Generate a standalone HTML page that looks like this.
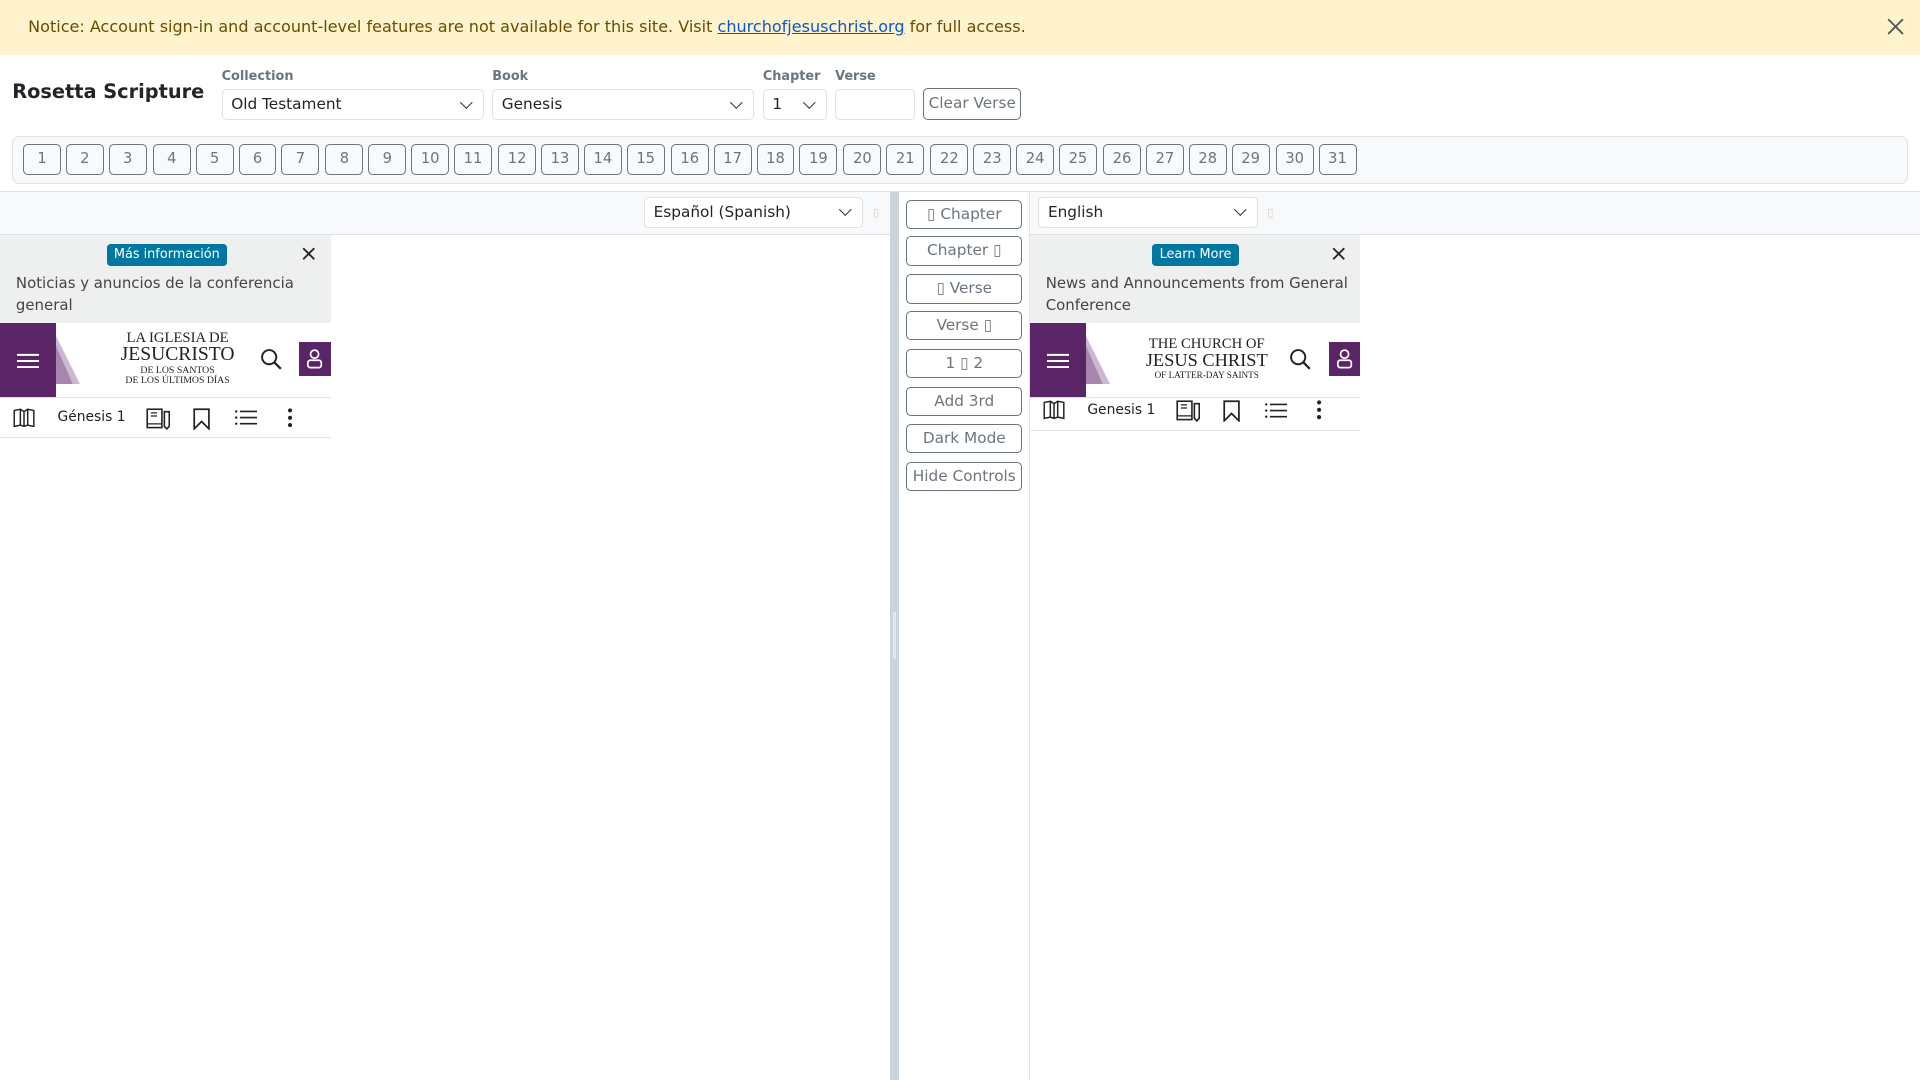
<!DOCTYPE html>
<html><head><meta charset="utf-8">
<style>
html{zoom:1.2245}
*{box-sizing:border-box;margin:0;padding:0}
body{width:1568px;height:882px;overflow:hidden;font-family:"DejaVu Sans","Liberation Sans",sans-serif;background:#fff;color:#212529;position:relative}
.abs{position:absolute}
.notice{left:0;top:0;width:1568px;height:45px;background:#fff3cd;color:#664d03;font-size:13.1px;padding:14px 23px}
.notice a{color:#0a58ca;text-decoration:underline}
.lbl{font-size:10.5px;font-weight:bold;color:#6c757d;top:56px}
.sel{top:73px;height:25px;border:1px solid #dee2e6;border-radius:4px;background:#fff;font-size:12.5px;padding:4px 7px;color:#212529}
.chev{position:absolute;right:10px;top:6px;width:7px;height:7px;border-right:1.5px solid #333;border-bottom:1.5px solid #333;transform:rotate(45deg)}
.btn{border:1px solid #6c757d;border-radius:4px;color:#6c757d;font-size:12.5px;text-align:center;background:#fff}
.bar{left:10px;top:111px;width:1548px;height:39px;background:#f8f9fa;border:1px solid #dee2e6;border-radius:6px}
.num{position:absolute;top:6px;width:31px;height:25px;line-height:23px;font-size:12px;background:#f8f9fa}
.ph{top:157px;height:35px;background:#f8f9fa;border-bottom:1px solid #dee2e6}
.mbtn{position:absolute;left:740px;width:95px;height:24px;line-height:22px}
.banner{background:#eeefef;height:72px;width:270px;font-size:12.2px;color:#444}
.learn{position:absolute;top:7px;background:#0077a0;color:#fff;font-size:10.5px;padding:3px 6px;border-radius:3px}
.hdr{height:60px;width:270px;background:#fff}
.tb{font-size:11.3px;color:#222}
</style></head><body>
<div class="abs notice">Notice: Account sign-in and account-level features are not available for this site. Visit <a>churchofjesuschrist.org</a> for full access.
<svg class="abs" style="left:1541px;top:15px" width="14" height="14" viewBox="0 0 14 14"><path d="M1 1L13 13M13 1L1 13" stroke="#555" stroke-width="1.5"/></svg></div>

<div class="abs" style="left:10px;top:65px;font-size:15.8px;font-weight:bold">Rosetta Scripture</div>
<div class="abs lbl" style="left:181px">Collection</div>
<div class="abs lbl" style="left:402px">Book</div>
<div class="abs lbl" style="left:623px">Chapter</div>
<div class="abs lbl" style="left:682px">Verse</div>
<div class="abs sel" style="left:181px;width:214px">Old Testament<span class="chev"></span></div>
<div class="abs sel" style="left:402px;width:214px">Genesis<span class="chev"></span></div>
<div class="abs sel" style="left:623px;width:52px">1<span class="chev"></span></div>
<div class="abs sel" style="left:682px;width:65px"></div>
<div class="abs btn" style="left:754px;top:72px;width:80px;height:26px;line-height:24px">Clear Verse</div>

<div class="abs bar">
<div class="num btn" style="left:8px">1</div><div class="num btn" style="left:43px">2</div><div class="num btn" style="left:78px">3</div><div class="num btn" style="left:114px">4</div><div class="num btn" style="left:149px">5</div><div class="num btn" style="left:184px">6</div><div class="num btn" style="left:219px">7</div><div class="num btn" style="left:255px">8</div><div class="num btn" style="left:290px">9</div><div class="num btn" style="left:325px">10</div><div class="num btn" style="left:360px">11</div><div class="num btn" style="left:396px">12</div><div class="num btn" style="left:431px">13</div><div class="num btn" style="left:466px">14</div><div class="num btn" style="left:501px">15</div><div class="num btn" style="left:537px">16</div><div class="num btn" style="left:572px">17</div><div class="num btn" style="left:607px">18</div><div class="num btn" style="left:642px">19</div><div class="num btn" style="left:678px">20</div><div class="num btn" style="left:713px">21</div><div class="num btn" style="left:749px">22</div><div class="num btn" style="left:784px">23</div><div class="num btn" style="left:819px">24</div><div class="num btn" style="left:854px">25</div><div class="num btn" style="left:890px">26</div><div class="num btn" style="left:925px">27</div><div class="num btn" style="left:960px">28</div><div class="num btn" style="left:995px">29</div><div class="num btn" style="left:1031px">30</div><div class="num btn" style="left:1066px">31</div>
</div>

<div class="abs" style="left:0;top:156px;width:1568px;height:1px;background:#dee2e6"></div>
<div class="abs ph" style="left:0;width:727px"></div>
<div class="abs ph" style="left:841px;width:727px"></div>
<div class="abs sel" style="left:526px;top:161px;width:179px">Español (Spanish)<span class="chev"></span></div>
<div class="abs" style="left:713px;top:168px;font-size:9px;color:#ccc">▯</div>
<div class="abs sel" style="left:848px;top:161px;width:179px">English<span class="chev"></span></div>
<div class="abs" style="left:1035px;top:168px;font-size:9px;color:#ccc">▯</div>

<div class="abs" style="left:727px;top:157px;width:7px;height:725px;background:#ccd3db"></div>
<div class="abs" style="left:729px;top:500px;width:3px;height:38px;background:#e4e8ec"></div>
<div class="abs" style="left:840px;top:157px;width:1px;height:725px;background:#dee2e6"></div>

<div class="btn mbtn" style="top:163px">▯ Chapter</div>
<div class="btn mbtn" style="top:193px">Chapter ▯</div>
<div class="btn mbtn" style="top:224px">▯ Verse</div>
<div class="btn mbtn" style="top:254px">Verse ▯</div>
<div class="btn mbtn" style="top:285px">1 ▯ 2</div>
<div class="btn mbtn" style="top:316px">Add 3rd</div>
<div class="btn mbtn" style="top:346px">Dark Mode</div>
<div class="btn mbtn" style="top:377px">Hide Controls</div>

<!-- left embed -->
<div class="abs banner" style="left:0;top:192px">
<div class="learn" style="left:87px">Más información</div>
<svg class="abs" style="left:247px;top:10px" width="11" height="11" viewBox="0 0 11 11"><path d="M1 1L10 10M10 1L1 10" stroke="#222" stroke-width="1.5"/></svg>
<div class="abs" style="left:13px;top:30px;width:236px;line-height:18px">Noticias y anuncios de la conferencia general</div>
</div>
<div class="abs hdr" style="left:0;top:264px">
<div class="abs" style="left:0;top:0;width:46px;height:60px;background:#5a2566"></div>
<svg class="abs" style="left:46px;top:10px" width="20" height="40"><polygon points="0,0 20,40 0,40" fill="#b79bbd" opacity=".7"/><polygon points="0,8 14,40 0,40" fill="#8e6496" opacity=".6"/></svg>
<svg class="abs" style="left:14px;top:24px" width="18" height="13"><path d="M0 1.5H18M0 6.5H18M0 11.5H18" stroke="#fff" stroke-width="1.6"/></svg>
<div class="abs" style="left:90px;top:6px;width:110px;text-align:center;font-family:'Liberation Serif',serif;color:#222;line-height:1">
<div style="font-size:12px">LA IGLESIA DE</div><div style="font-size:16px">JESUCRISTO</div><div style="font-size:8px;margin-top:1px">DE LOS SANTOS<br>DE LOS ÚLTIMOS DÍAS</div></div>
<svg class="abs" style="left:212px;top:20px" width="18" height="18"><circle cx="7.5" cy="7.5" r="5.8" fill="none" stroke="#222" stroke-width="1.6"/><path d="M11.7 11.7L17 17" stroke="#222" stroke-width="1.8"/></svg>
<div class="abs" style="left:244px;top:15px;width:26px;height:28px;background:#5a2566"></div>
<svg class="abs" style="left:250px;top:20px" width="14" height="18"><circle cx="7" cy="5" r="3.3" fill="none" stroke="#fff" stroke-width="1.4"/><rect x="1.5" y="10" width="11" height="6" rx="2" fill="none" stroke="#fff" stroke-width="1.4"/></svg>
</div>
<div class="abs" style="left:0;top:324px;width:270px;height:1px;background:#e3e3e3"></div>
<div class="abs" style="left:0;top:357px;width:270px;height:1px;background:#e3e3e3"></div>
<div class="abs tb" style="left:0;top:324px;width:270px;height:33px">
<svg class="abs" style="left:11px;top:9px" width="18" height="16"><path d="M1 2L6 1L9 3L12 1L17 2V15L12 14L9 15L6 14L1 15Z M9 3V15 M6 1V14 M12 1V14" fill="none" stroke="#222" stroke-width="1.2"/></svg>
<div class="abs" style="left:47px;top:10px">Génesis 1</div>
<svg class="abs" style="left:119px;top:9px" width="20" height="18"><rect x="1" y="1" width="12" height="15" fill="none" stroke="#222" stroke-width="1.3"/><path d="M4 4H9M4 6.5H9M1 13H13" stroke="#222" stroke-width="1"/><path d="M15 3H19V15L17 17L15 15Z" fill="none" stroke="#222" stroke-width="1.3"/></svg>
<svg class="abs" style="left:158px;top:9px" width="14" height="18"><path d="M1 1H13V17L7 11L1 17Z" fill="none" stroke="#222" stroke-width="1.4"/></svg>
<svg class="abs" style="left:192px;top:10px" width="18" height="14"><path d="M4 2H18M4 7H18M4 12H18" stroke="#222" stroke-width="1.4"/><circle cx="1" cy="2" r="1" fill="#222"/><circle cx="1" cy="7" r="1" fill="#222"/><circle cx="1" cy="12" r="1" fill="#222"/></svg>
<svg class="abs" style="left:234px;top:9px" width="5" height="16"><circle cx="2.5" cy="2" r="1.7" fill="#222"/><circle cx="2.5" cy="8" r="1.7" fill="#222"/><circle cx="2.5" cy="14" r="1.7" fill="#222"/></svg>
</div>

<!-- right embed -->
<div class="abs banner" style="left:841px;top:192px">
<div class="learn" style="left:100px">Learn More</div>
<svg class="abs" style="left:247px;top:10px" width="11" height="11" viewBox="0 0 11 11"><path d="M1 1L10 10M10 1L1 10" stroke="#222" stroke-width="1.5"/></svg>
<div class="abs" style="left:13px;top:30px;width:250px;line-height:18px">News and Announcements from General Conference</div>
</div>
<div class="abs hdr" style="left:841px;top:264px">
<div class="abs" style="left:0;top:0;width:46px;height:60px;background:#5a2566"></div>
<svg class="abs" style="left:46px;top:10px" width="20" height="40"><polygon points="0,0 20,40 0,40" fill="#b79bbd" opacity=".7"/><polygon points="0,8 14,40 0,40" fill="#8e6496" opacity=".6"/></svg>
<svg class="abs" style="left:14px;top:24px" width="18" height="13"><path d="M0 1.5H18M0 6.5H18M0 11.5H18" stroke="#fff" stroke-width="1.6"/></svg>
<div class="abs" style="left:92px;top:11px;width:105px;text-align:center;font-family:'Liberation Serif',serif;color:#222;line-height:1">
<div style="font-size:12px">THE CHURCH OF</div><div style="font-size:15px">JESUS CHRIST</div><div style="font-size:7.5px;margin-top:1px">OF LATTER-DAY SAINTS</div></div>
<svg class="abs" style="left:212px;top:20px" width="18" height="18"><circle cx="7.5" cy="7.5" r="5.8" fill="none" stroke="#222" stroke-width="1.6"/><path d="M11.7 11.7L17 17" stroke="#222" stroke-width="1.8"/></svg>
<div class="abs" style="left:244px;top:15px;width:26px;height:28px;background:#5a2566"></div>
<svg class="abs" style="left:250px;top:20px" width="14" height="18"><circle cx="7" cy="5" r="3.3" fill="none" stroke="#fff" stroke-width="1.4"/><rect x="1.5" y="10" width="11" height="6" rx="2" fill="none" stroke="#fff" stroke-width="1.4"/></svg>
</div>
<div class="abs" style="left:841px;top:324px;width:270px;height:1px;background:#e3e3e3"></div>
<div class="abs" style="left:841px;top:351px;width:270px;height:1px;background:#e3e3e3"></div>
<div class="abs tb" style="left:841px;top:318px;width:270px;height:33px">
<svg class="abs" style="left:11px;top:9px" width="18" height="16"><path d="M1 2L6 1L9 3L12 1L17 2V15L12 14L9 15L6 14L1 15Z M9 3V15 M6 1V14 M12 1V14" fill="none" stroke="#222" stroke-width="1.2"/></svg>
<div class="abs" style="left:47px;top:10px">Genesis 1</div>
<svg class="abs" style="left:119px;top:9px" width="20" height="18"><rect x="1" y="1" width="12" height="15" fill="none" stroke="#222" stroke-width="1.3"/><path d="M4 4H9M4 6.5H9M1 13H13" stroke="#222" stroke-width="1"/><path d="M15 3H19V15L17 17L15 15Z" fill="none" stroke="#222" stroke-width="1.3"/></svg>
<svg class="abs" style="left:158px;top:9px" width="14" height="18"><path d="M1 1H13V17L7 11L1 17Z" fill="none" stroke="#222" stroke-width="1.4"/></svg>
<svg class="abs" style="left:192px;top:10px" width="18" height="14"><path d="M4 2H18M4 7H18M4 12H18" stroke="#222" stroke-width="1.4"/><circle cx="1" cy="2" r="1" fill="#222"/><circle cx="1" cy="7" r="1" fill="#222"/><circle cx="1" cy="12" r="1" fill="#222"/></svg>
<svg class="abs" style="left:234px;top:9px" width="5" height="16"><circle cx="2.5" cy="2" r="1.7" fill="#222"/><circle cx="2.5" cy="8" r="1.7" fill="#222"/><circle cx="2.5" cy="14" r="1.7" fill="#222"/></svg>
</div>
</body></html>
